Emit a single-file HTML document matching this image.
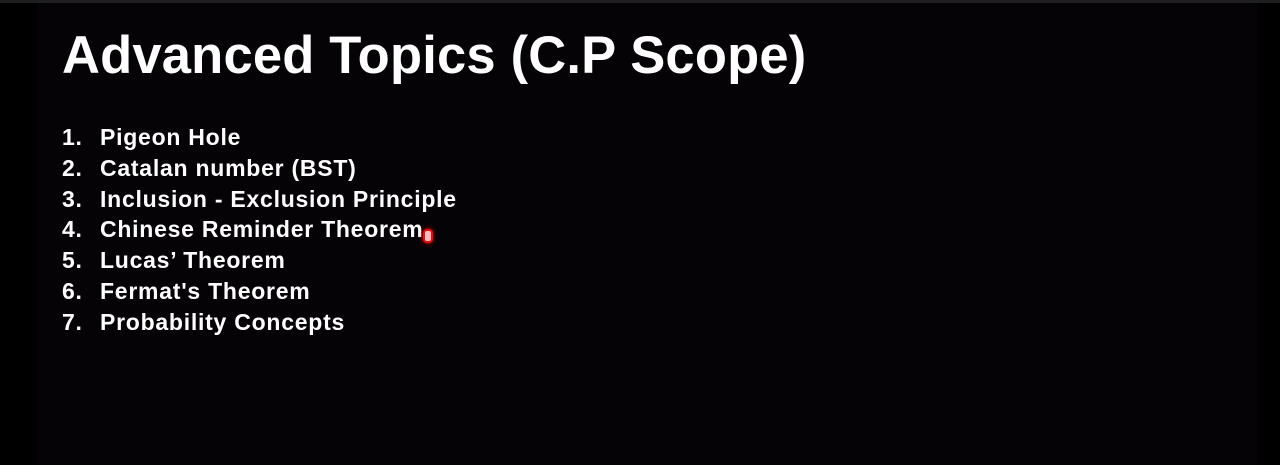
<!DOCTYPE html>
<html><head><meta charset="utf-8"><style>
html,body{margin:0;padding:0;background:#000;width:1280px;height:465px;overflow:hidden}
.top{position:absolute;left:0;top:0;width:1280px;height:3px;background:#1e1e20}
.slide{position:absolute;left:37px;top:3px;width:1220px;height:462px;background:#060307}
h1{position:absolute;left:62px;top:30px;margin:0;font:bold 52.5px/1 "Liberation Sans",Arial,sans-serif;letter-spacing:0.2px;color:#fff;white-space:nowrap}
.li{position:absolute;left:62px;font-size:23px;letter-spacing:0.75px;line-height:1;color:#fff;font-family:"Liberation Sans",Arial,sans-serif;font-weight:bold;white-space:nowrap}
.li span{position:absolute;left:38px}
.cur{position:absolute;left:423px;top:229px;width:6px;height:10px;border:2px solid #e01010;border-radius:4px;box-shadow:0 0 4px #f00;background:#fbb}
</style></head><body>
<div class="top"></div><div class="slide"></div>
<h1>Advanced Topics (C.P Scope)</h1>
<div class="li" style="top:126px">1.<span>Pigeon Hole</span></div>
<div class="li" style="top:157px">2.<span>Catalan number (BST)</span></div>
<div class="li" style="top:188px">3.<span>Inclusion - Exclusion Principle</span></div>
<div class="li" style="top:218px">4.<span>Chinese Reminder Theorem</span></div>
<div class="li" style="top:249px">5.<span>Lucas’ Theorem</span></div>
<div class="li" style="top:280px">6.<span>Fermat's Theorem</span></div>
<div class="li" style="top:311px">7.<span>Probability Concepts</span></div>
<div class="cur"></div>
</body></html>
